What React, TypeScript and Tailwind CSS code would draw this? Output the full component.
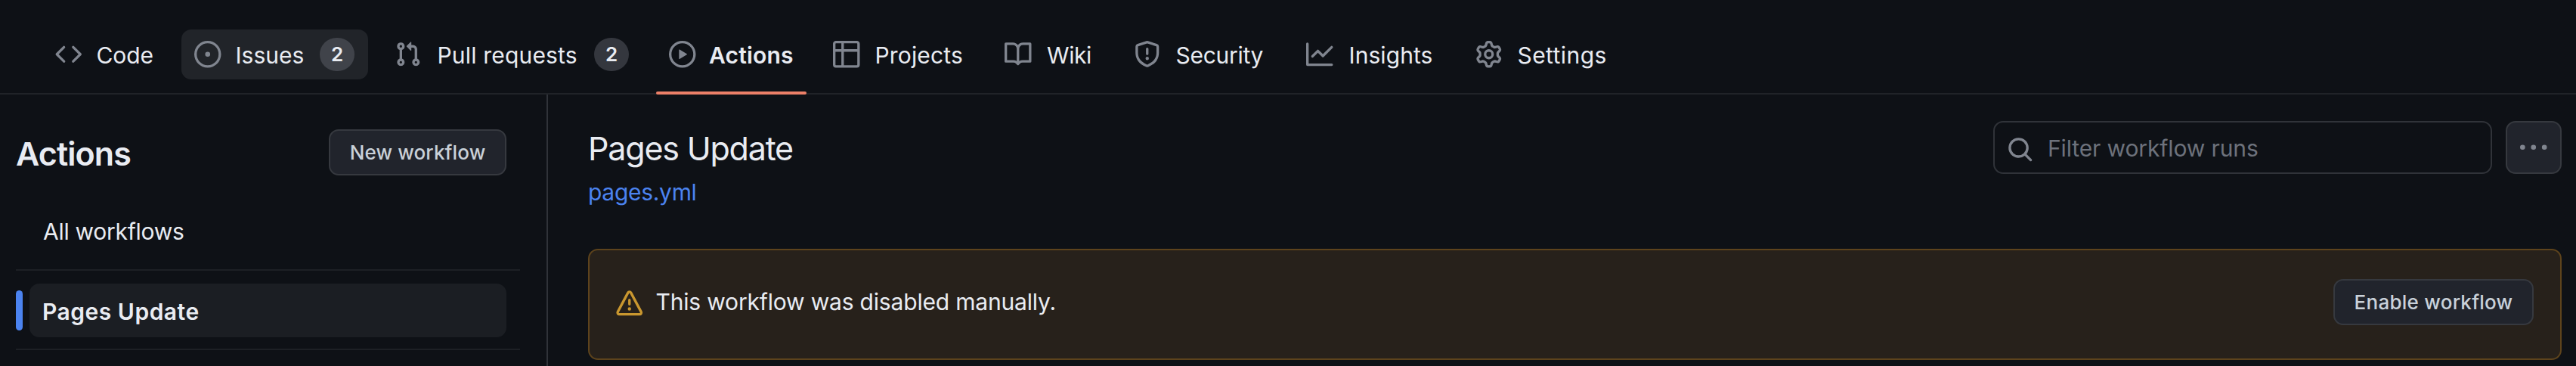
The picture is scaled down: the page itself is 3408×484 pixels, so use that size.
import React from "react";

const paths = {
  code: "m11.28 3.22 4.25 4.25a.75.75 0 0 1 0 1.06l-4.25 4.25a.749.749 0 0 1-1.275-.326.749.749 0 0 1 .215-.734L13.94 8l-3.72-3.72a.749.749 0 0 1 .326-1.275.749.749 0 0 1 .734.215Zm-6.56 0a.751.751 0 0 1 1.042.018.751.751 0 0 1 .018 1.042L2.06 8l3.72 3.72a.749.749 0 0 1-.326 1.275.749.749 0 0 1-.734-.215L.47 8.53a.75.75 0 0 1 0-1.06Z",
  issue: "M8 9.5a1.5 1.5 0 1 0 0-3 1.5 1.5 0 0 0 0 3ZM8 0a8 8 0 1 1 0 16A8 8 0 0 1 8 0ZM1.5 8a6.5 6.5 0 1 0 13 0 6.5 6.5 0 0 0-13 0Z",
  pull: "M1.5 3.25a2.25 2.25 0 1 1 3 2.122v5.256a2.251 2.251 0 1 1-1.5 0V5.372A2.25 2.25 0 0 1 1.5 3.25Zm5.677-.177L9.573.677A.25.25 0 0 1 10 .854V2.5h1A2.5 2.5 0 0 1 13.5 5v5.628a2.251 2.251 0 1 1-1.5 0V5a1 1 0 0 0-1-1h-1v1.646a.25.25 0 0 1-.427.177L7.177 3.427a.25.25 0 0 1 0-.354ZM3.75 2.5a.75.75 0 1 0 0 1.5.75.75 0 0 0 0-1.5Zm0 9.5a.75.75 0 1 0 0 1.5.75.75 0 0 0 0-1.5Zm8.25.75a.75.75 0 1 0 1.5 0 .75.75 0 0 0-1.5 0Z",
  play: "M8 0a8 8 0 1 1 0 16A8 8 0 0 1 8 0ZM1.5 8a6.5 6.5 0 1 0 13 0 6.5 6.5 0 0 0-13 0Zm4.879-2.773 4.264 2.559a.25.25 0 0 1 0 .428l-4.264 2.559A.25.25 0 0 1 6 10.559V5.442a.25.25 0 0 1 .379-.215Z",
  table: "M0 1.75C0 .784.784 0 1.75 0h12.5C15.216 0 16 .784 16 1.75v12.5A1.75 1.75 0 0 1 14.25 16H1.75A1.75 1.75 0 0 1 0 14.25ZM6.5 6.5v8h7.75a.25.25 0 0 0 .25-.25V6.5Zm8-1.5V1.75a.25.25 0 0 0-.25-.25H6.5V5Zm-13 1.5v7.75c0 .138.112.25.25.25H5v-8ZM5 5V1.5H1.75a.25.25 0 0 0-.25.25V5Z",
  book: "M0 1.75A.75.75 0 0 1 .75 1h4.253c1.227 0 2.317.59 3 1.501A3.743 3.743 0 0 1 11.006 1h4.245a.75.75 0 0 1 .75.75v10.5a.75.75 0 0 1-.75.75h-4.507a2.25 2.25 0 0 0-1.591.659l-.622.621a.75.75 0 0 1-1.06 0l-.622-.621A2.25 2.25 0 0 0 5.258 13H.75a.75.75 0 0 1-.75-.75Zm7.251 10.324.004-5.073-.002-2.253A2.25 2.25 0 0 0 5.003 2.5H1.5v9h3.757a3.75 3.75 0 0 1 1.994.574ZM8.755 4.75l-.004 7.322a3.752 3.752 0 0 1 1.992-.572H14.5v-9h-3.495a2.25 2.25 0 0 0-2.25 2.25Z",
  shield: "M7.467.133a1.748 1.748 0 0 1 1.066 0l5.25 1.68A1.75 1.75 0 0 1 15 3.48V7c0 1.566-.32 3.182-1.303 4.682-.983 1.498-2.585 2.813-5.032 3.855a1.697 1.697 0 0 1-1.33 0c-2.447-1.042-4.049-2.357-5.032-3.855C1.32 10.182 1 8.566 1 7V3.48a1.75 1.75 0 0 1 1.217-1.667Zm.61 1.429a.25.25 0 0 0-.153 0l-5.25 1.68a.25.25 0 0 0-.174.238V7c0 1.358.275 2.666 1.057 3.86.784 1.194 2.121 2.34 4.366 3.297a.196.196 0 0 0 .154 0c2.245-.956 3.582-2.104 4.366-3.298C13.225 9.666 13.5 8.36 13.5 7V3.48a.251.251 0 0 0-.174-.237l-5.25-1.68ZM8.75 4.75v3a.75.75 0 0 1-1.5 0v-3a.75.75 0 0 1 1.5 0ZM9 10.5a1 1 0 1 1-2 0 1 1 0 0 1 2 0Z",
  graph: "M1.5 1.75V13.5h13.75a.75.75 0 0 1 0 1.5H.75a.75.75 0 0 1-.75-.75V1.75a.75.75 0 0 1 1.5 0Zm14.28 2.53-5.25 5.25a.75.75 0 0 1-1.06 0L7 7.06 4.28 9.78a.751.751 0 0 1-1.042-.018.751.751 0 0 1-.018-1.042l3.25-3.25a.75.75 0 0 1 1.06 0L10 7.94l4.72-4.72a.751.751 0 0 1 1.042.018.751.751 0 0 1 .018 1.042Z",
  gear: "M8 0a8.2 8.2 0 0 1 .701.031C9.444.095 9.99.645 10.16 1.29l.288 1.107c.018.066.079.158.212.224.231.114.454.243.668.386.123.082.233.09.299.071l1.103-.303c.644-.176 1.392.021 1.82.63.27.385.506.792.704 1.218.315.675.111 1.422-.364 1.891l-.814.806c-.049.048-.098.147-.088.294.016.257.016.515 0 .772-.01.147.038.246.088.294l.814.806c.475.469.679 1.216.364 1.891a7.977 7.977 0 0 1-.704 1.217c-.428.61-1.176.807-1.82.63l-1.102-.302c-.067-.019-.177-.011-.3.071a5.909 5.909 0 0 1-.668.386c-.133.066-.194.158-.211.224l-.29 1.106c-.168.646-.715 1.196-1.458 1.26a8.006 8.006 0 0 1-1.402 0c-.743-.064-1.289-.614-1.458-1.26l-.289-1.106c-.018-.066-.079-.158-.212-.224a5.738 5.738 0 0 1-.668-.386c-.123-.082-.233-.09-.299-.071l-1.103.303c-.644.176-1.392-.021-1.82-.63a8.12 8.12 0 0 1-.704-1.218c-.315-.675-.111-1.422.363-1.891l.815-.806c.05-.048.098-.147.088-.294a6.214 6.214 0 0 1 0-.772c.01-.147-.038-.246-.088-.294l-.815-.806C.635 6.045.431 5.298.746 4.623a7.92 7.92 0 0 1 .704-1.217c.428-.61 1.176-.807 1.82-.63l1.102.302c.067.019.177.011.3-.071.214-.143.437-.272.668-.386.133-.066.194-.158.211-.224l.29-1.106C6.009.645 6.556.095 7.299.03 7.53.01 7.764 0 8 0Zm-.571 1.525c-.036.003-.108.036-.137.146l-.289 1.105c-.147.561-.549.967-.998 1.189-.173.086-.34.183-.5.29-.417.278-.97.423-1.529.27l-1.103-.303c-.109-.03-.175.016-.195.045-.22.312-.412.644-.573.99-.014.031-.021.11.059.19l.815.806c.411.406.562.957.53 1.456a4.709 4.709 0 0 0 0 .582c.032.499-.119 1.05-.53 1.456l-.815.806c-.081.08-.073.159-.059.19.162.346.353.677.573.989.02.03.085.076.195.046l1.102-.303c.56-.153 1.113-.008 1.53.27.161.107.328.204.501.29.447.222.85.629.997 1.189l.289 1.105c.029.109.101.143.137.146a6.6 6.6 0 0 0 1.142 0c.036-.003.108-.036.137-.146l.289-1.105c.147-.561.549-.967.998-1.189.173-.086.34-.183.5-.29.417-.278.97-.423 1.529-.27l1.103.303c.109.029.175-.016.195-.045.22-.313.411-.644.573-.99.014-.031.021-.11-.059-.19l-.815-.806c-.411-.406-.562-.957-.53-1.456a4.709 4.709 0 0 0 0-.582c-.032-.499.119-1.05.53-1.456l.815-.806c.081-.08.073-.159.059-.19a6.464 6.464 0 0 0-.573-.989c-.02-.03-.085-.076-.195-.046l-1.102.303c-.56.153-1.113.008-1.53-.27a4.44 4.44 0 0 0-.501-.29c-.447-.222-.85-.629-.997-1.189l-.289-1.105c-.029-.11-.101-.143-.137-.146a6.6 6.6 0 0 0-1.142 0ZM11 8a3 3 0 1 1-6 0 3 3 0 0 1 6 0ZM9.5 8a1.5 1.5 0 1 0-3.001.001A1.5 1.5 0 0 0 9.5 8Z",
  alert: "M6.457 1.047c.659-1.234 2.427-1.234 3.086 0l6.082 11.378A1.75 1.75 0 0 1 14.082 15H1.918a1.75 1.75 0 0 1-1.543-2.575Zm1.763.707a.25.25 0 0 0-.44 0L1.698 13.132a.25.25 0 0 0 .22.368h12.164a.25.25 0 0 0 .22-.368Zm.53 3.996v2.5a.75.75 0 0 1-1.5 0v-2.5a.75.75 0 0 1 1.5 0ZM9 11a1 1 0 1 1-2 0 1 1 0 0 1 2 0Z",
  search: "M10.68 11.74a6 6 0 0 1-7.922-8.982 6 6 0 0 1 8.982 7.922l3.04 3.04a.749.749 0 0 1-.326 1.275.749.749 0 0 1-.734-.215ZM11.5 7a4.499 4.499 0 1 0-8.997 0A4.499 4.499 0 0 0 11.5 7Z",
  kebab: "M1.5 9.5a1.5 1.5 0 1 0 0-3 1.5 1.5 0 0 0 0 3ZM8 9.5a1.5 1.5 0 1 0 0-3 1.5 1.5 0 0 0 0 3ZM14.5 9.5a1.5 1.5 0 1 0 0-3 1.5 1.5 0 0 0 0 3Z",
};

function Icon({ name, className = "" }: { name: keyof typeof paths; className?: string }) {
  return (
    <svg viewBox="0 0 16 16" fill="currentColor" overflow="visible" className={`size-[35.5px] shrink-0 ${className}`}>
      <path d={paths[name]} />
    </svg>
  );
}

type Tab = { icon: keyof typeof paths; label: string; box: string; text: string; count?: string; countBox?: string; active?: boolean };

const tabs: Tab[] = [
  { icon: "code", label: "Code", box: "w-[166px]", text: "ml-[19px] tracking-[-0.09px]" },
  { icon: "issue", label: "Issues", box: "w-[247px] bg-[#212429]", text: "ml-[19px]", count: "2", countBox: "bg-[#40434a]" },
  { icon: "pull", label: "Pull requests", box: "w-[345px]", text: "ml-[21px] tracking-[0.18px]", count: "2", countBox: "bg-[#34373e]" },
  { icon: "play", label: "Actions", box: "w-[199px]", text: "ml-[17.5px] font-semibold tracking-[0.18px]", active: true },
  { icon: "table", label: "Projects", box: "w-[209px]", text: "ml-[20px] tracking-[0.16px]" },
  { icon: "book", label: "Wiki", box: "w-[153px]", text: "ml-[20.5px] tracking-[-0.43px]" },
  { icon: "shield", label: "Security", box: "w-[210px]", text: "ml-[20px] tracking-[-0.29px]" },
  { icon: "graph", label: "Insights", box: "w-[206px]", text: "ml-[21px] tracking-[0.07px]" },
  { icon: "gear", label: "Settings", box: "w-[208px]", text: "ml-[20px] tracking-[0.43px]" },
];

function NavTab({ tab }: { tab: Tab }) {
  return (
    <a className={`relative flex h-[66px] shrink-0 items-center rounded-[13px] pl-[17px] pr-[18px] ${tab.box}`}>
      <Icon name={tab.icon} className="text-[#80858f]" />
      <span className={`whitespace-nowrap pt-[2px] ${tab.text}`}>{tab.label}</span>
      {tab.count && (
        <span className={`ml-auto flex h-[44px] w-[46px] items-center justify-center rounded-[22px] text-[26px] font-semibold ${tab.countBox}`}>
          {tab.count}
        </span>
      )}
      {tab.active && <span className="absolute inset-x-0 top-[82px] h-1 rounded-[2px] bg-[#ec8068]" />}
    </a>
  );
}

const button = "flex h-[61px] items-center justify-center rounded-[13px] border-2 border-[#36393f] bg-[#21242c] text-[26px] font-medium text-[#c9d1d9] whitespace-nowrap";

export default function App() {
  return (
    <div className="flex h-[484px] w-[3408px] flex-col overflow-hidden bg-[#0e1116] font-[Inter,sans-serif] text-[30px] leading-[44px] text-[#e9ecf2]">
      <nav className="flex h-[125px] shrink-0 gap-[18px] border-b-2 border-[#202328] pl-[56px] pt-[39px]">
        {tabs.map((tab) => (
          <NavTab key={tab.label} tab={tab} />
        ))}
      </nav>

      <div className="flex min-h-0 flex-1">
        <aside className="w-[725px] shrink-0 border-r-2 border-[#303339] pl-[21px]">
          <div className="flex h-[107px] w-[649px] items-end justify-between">
            <h2 className="pb-[7px] text-[43px] font-semibold tracking-[-0.9px]">Actions</h2>
            <button className={`w-[235px] tracking-[0.14px] ${button}`}>New workflow</button>
          </div>
          <div className="mt-[38px] flex h-[71px] items-center pl-[36px] pt-px tracking-[-0.27px]">All workflows</div>
          <div className="mt-[15px] h-[2px] w-[667px] bg-[#1d2025]" />
          <div className="mt-[17px] flex h-[71px] w-[649px] items-center justify-between">
            <span className="h-[53px] w-[9px] rounded-full bg-[#4b83f0]" />
            <span className="flex h-full w-[631px] items-center rounded-[13px] bg-[#1b1e23] pl-[17px] pt-[3px] font-semibold tracking-[0.5px]">
              Pages Update
            </span>
          </div>
          <div className="mt-[15px] h-[2px] w-[667px] bg-[#1d2025]" />
        </aside>

        <main className="flex-1 pl-[53px] pr-[19px] pt-[35px]">
          <div className="flex h-[169px] justify-between">
            <div className="pt-[9px]">
              <h1 className="pt-[5px] text-[43px] leading-[44px] tracking-[-1.2px]">Pages Update</h1>
              <a className="mt-[14px] block tracking-[-0.3px] text-[#4b83f0]">pages.yml</a>
            </div>
            <div className="flex gap-[18px]">
              <div className="flex h-[70px] w-[660px] items-center rounded-[13px] border-2 border-[#303339] pl-[16px]">
                <Icon name="search" className="mt-[5px] text-[#80858f]" />
                <span className="ml-[18.5px] pt-[2px] tracking-[-0.12px] text-[#6d727c]">Filter workflow runs</span>
              </div>
              <button className="flex h-[70px] w-[74px] items-center justify-center rounded-[13px] border-2 border-[#36393f] bg-[#21242c] text-[#80858f]">
                <Icon name="kebab" />
              </button>
            </div>
          </div>

          <div className="flex h-[147px] items-start rounded-[13px] border-2 border-[#5d431c] bg-[#27211b] pl-[34.5px] pr-[35px] pt-[38px]">
            <Icon name="alert" className="mt-[15px] text-[#c9972f]" />
            <p className="ml-[17.5px] mt-[8px] tracking-[-0.18px]">This workflow was disabled manually.</p>
            <button className={`ml-auto w-[265px] tracking-[0.26px] ${button}`}>Enable workflow</button>
          </div>
        </main>
      </div>
    </div>
  );
}
